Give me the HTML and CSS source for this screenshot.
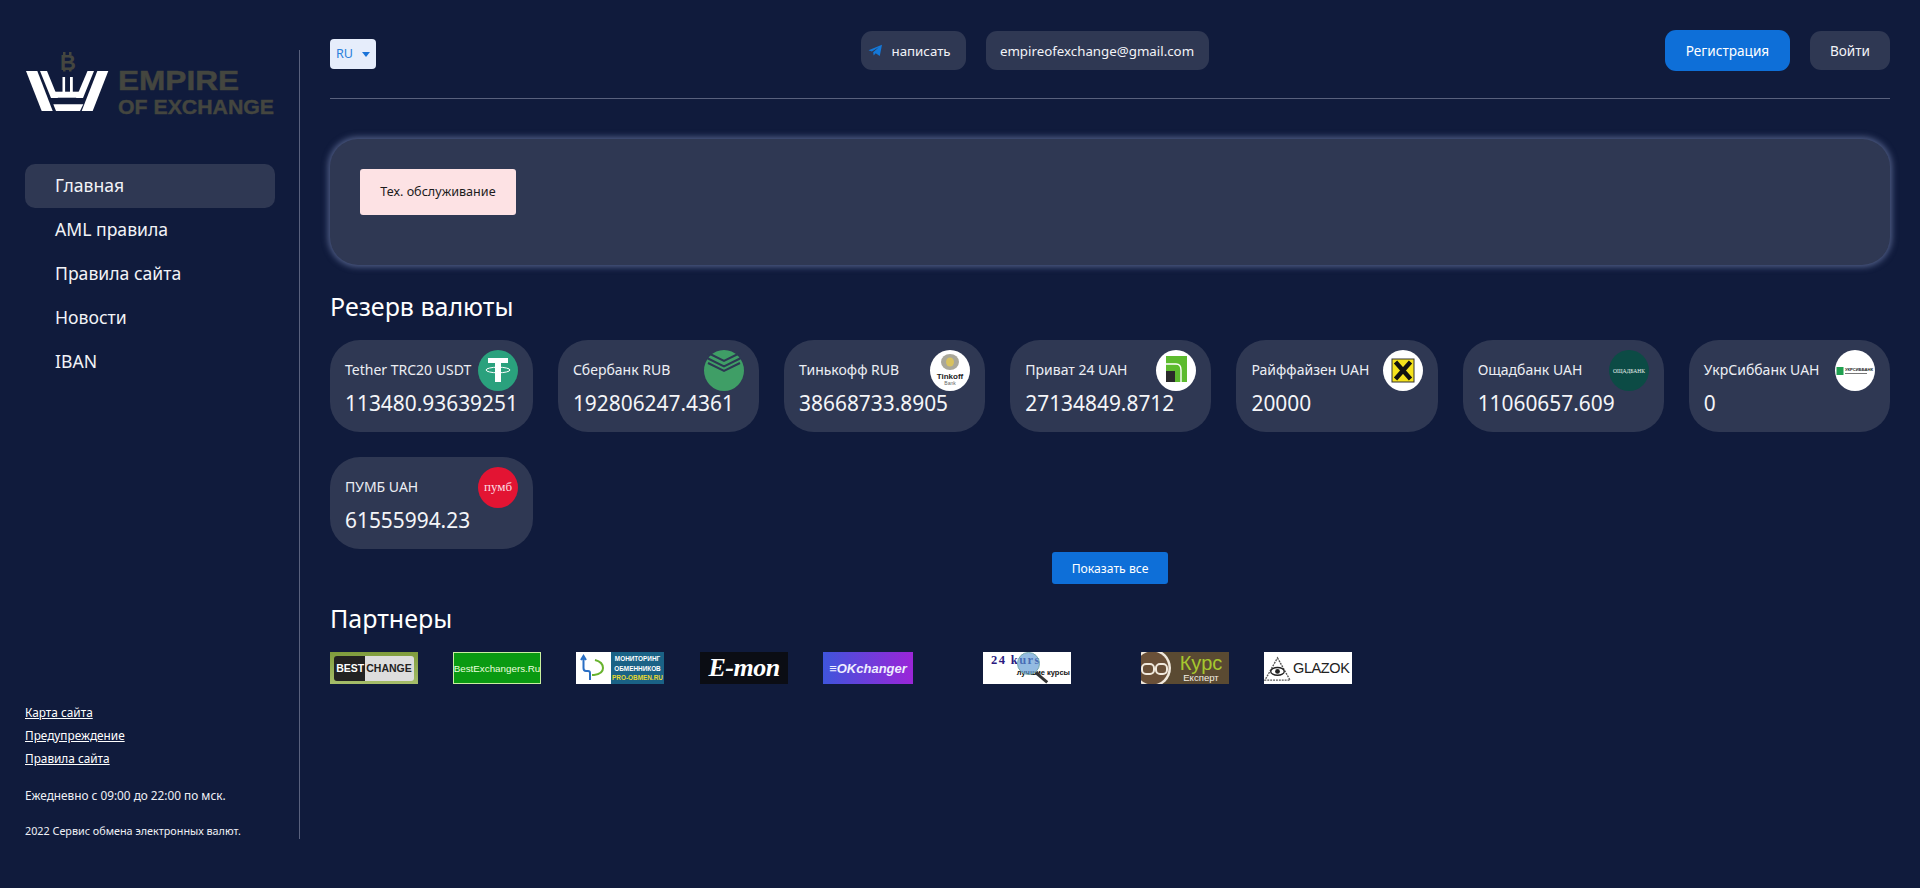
FILE: index.html
```html
<!DOCTYPE html>
<html lang="ru">
<head>
<meta charset="UTF-8">
<meta name="viewport" content="width=device-width, initial-scale=1.0">
<title>Empire of Exchange</title>
<link rel="stylesheet" href="styles.css">
</head>
<body>
<div class="page">
  <aside class="sidebar">
    <div class="sidebar-top">
      <svg class="logo" viewBox="0 0 250 70">
        <g fill="#fff">
          <polygon points="1,21 12.3,21 27.7,61 16.7,61"/>
          <polygon points="15,21 22,21 33,48 26,48"/>
          <polygon points="83.3,21 72.3,21 56.7,61 67.7,61"/>
          <polygon points="69,21 62.5,21 51,48 58,48"/>
          <rect x="27" y="41.7" width="30" height="6"/>
          <rect x="37.5" y="27" width="2.6" height="15"/>
          <rect x="45" y="27" width="2.8" height="15"/>
          <polygon points="28.3,54.3 58.3,54.3 55,61 31,61"/>
        </g>
        <g fill="#44463f">
          <rect x="38" y="2" width="2.5" height="3"/>
          <rect x="44" y="2" width="2.5" height="3"/>
          <rect x="38" y="18.5" width="2.5" height="3"/>
          <rect x="44" y="18.5" width="2.5" height="3"/>
          <text class="logo-b" x="35" y="20">B</text>
          <text class="logo-big" x="93" y="40" textLength="121" lengthAdjust="spacingAndGlyphs">EMPIRE</text>
          <text class="logo-small" x="93" y="64" textLength="156" lengthAdjust="spacingAndGlyphs">OF EXCHANGE</text>
        </g>
      </svg>
      <nav class="menu">
        <a class="menu-item active" href="#">Главная</a>
        <a class="menu-item" href="#">AML правила</a>
        <a class="menu-item" href="#">Правила сайта</a>
        <a class="menu-item" href="#">Новости</a>
        <a class="menu-item" href="#">IBAN</a>
      </nav>
    </div>
    <div class="sidebar-bottom">
      <a class="foot-link" href="#">Карта сайта</a>
      <a class="foot-link" href="#">Предупреждение</a>
      <a class="foot-link" href="#">Правила сайта</a>
      <p class="foot-text first">Ежедневно с 09:00 до 22:00 по мск.</p>
      <p class="foot-text small">2022 Сервис обмена электронных валют.</p>
    </div>
  </aside>

  <main class="content">
    <header class="topbar">
      <div class="lang">RU<span class="lang-arrow"></span></div>
      <div class="contacts">
        <a class="btn-dark tg" href="#">
          <svg class="tg-icon" viewBox="0 0 16 14"><path d="M0.5 6.8 15 0.8 12.6 13 8.2 10 6 12.4 5.5 8.8 11.5 3.4 4 8.2Z" fill="#1478d8"/></svg>
          написать
        </a>
        <a class="btn-dark mail" href="#">empireofexchange@gmail.com</a>
      </div>
      <div class="auth">
        <a class="btn-blue" href="#">Регистрация</a>
        <a class="btn-dark login" href="#">Войти</a>
      </div>
    </header>

    <section class="notice">
      <div class="alert">Тех. обслуживание</div>
    </section>

    <h2 class="title">Резерв валюты</h2>
    <div class="reserves">
      <div class="card">
        <div class="card-head">
          <span class="card-name">Tether TRC20 USDT</span>
          <svg class="coin" viewBox="0 0 40 41">
            <ellipse cx="20" cy="20.5" rx="20" ry="20.5" fill="#2aa17d"/>
            <path d="M10 8H30V13H23V32H17V13H10Z" fill="#fff"/>
            <ellipse cx="20" cy="20" rx="12" ry="2.8" fill="none" stroke="#fff" stroke-width="1"/>
          </svg>
        </div>
        <div class="card-value">113480.93639251</div>
      </div>
      <div class="card">
        <div class="card-head">
          <span class="card-name">Сбербанк RUB</span>
          <svg class="coin" viewBox="0 0 40 41">
            <ellipse cx="20" cy="20.5" rx="20" ry="20.5" fill="#3f9e66"/>
            <path d="M4 3 20 11 36 3M3 8 20 16.5 37 8M4 13 20 21 36 13" fill="none" stroke="#2d3853" stroke-width="2"/>
          </svg>
        </div>
        <div class="card-value">192806247.4361</div>
      </div>
      <div class="card">
        <div class="card-head">
          <span class="card-name">Тинькофф RUB</span>
          <svg class="coin" viewBox="0 0 40 41">
            <ellipse cx="20" cy="20.5" rx="20" ry="20.5" fill="#fff"/>
            <ellipse cx="20" cy="12" rx="9" ry="8" fill="#a9a79a"/>
            <ellipse cx="20" cy="12" rx="4" ry="4.5" fill="#d8c25e"/>
            <text class="tink-name" x="20" y="28.5" text-anchor="middle">Tinkoff</text>
            <text class="tink-bank" x="20" y="35" text-anchor="middle">Bank</text>
          </svg>
        </div>
        <div class="card-value">38668733.8905</div>
      </div>
      <div class="card">
        <div class="card-head">
          <span class="card-name">Приват 24 UAH</span>
          <svg class="coin" viewBox="0 0 40 41">
            <ellipse cx="20" cy="20.5" rx="20" ry="20.5" fill="#fff"/>
            <rect x="10" y="6" width="21" height="26" fill="#5dbb2e"/>
            <path d="M10 14H20Q25 14 25 20V32" fill="none" stroke="#fff" stroke-width="1.4"/>
            <rect x="10" y="21" width="9" height="11" fill="#2b2b2b"/>
          </svg>
        </div>
        <div class="card-value">27134849.8712</div>
      </div>
      <div class="card">
        <div class="card-head">
          <span class="card-name">Райффайзен UAH</span>
          <svg class="coin" viewBox="0 0 40 41">
            <ellipse cx="20" cy="20.5" rx="20" ry="20.5" fill="#fff"/>
            <rect x="9" y="9" width="22" height="23" fill="#f5e21c" stroke="#333" stroke-width="1"/>
            <path d="M12.5 12 27.5 29M27.5 12 12.5 29" stroke="#111" stroke-width="4.4"/>
          </svg>
        </div>
        <div class="card-value">20000</div>
      </div>
      <div class="card">
        <div class="card-head">
          <span class="card-name">Ощадбанк UAH</span>
          <svg class="coin" viewBox="0 0 40 41">
            <ellipse cx="20" cy="20.5" rx="20" ry="20.5" fill="#0c4b45"/>
            <text class="oschad" x="20" y="22.5" text-anchor="middle" textLength="32" lengthAdjust="spacingAndGlyphs">ОЩАДБАНК</text>
          </svg>
        </div>
        <div class="card-value">11060657.609</div>
      </div>
      <div class="card">
        <div class="card-head">
          <span class="card-name">УкрСиббанк UAH</span>
          <svg class="coin" viewBox="0 0 40 41">
            <ellipse cx="20" cy="20.5" rx="20" ry="20.5" fill="#fff"/>
            <rect x="1.5" y="17" width="7" height="8" fill="#20a050"/>
            <text class="ukrsib" x="10" y="20.5" textLength="28" lengthAdjust="spacingAndGlyphs">УКРСИББАНК</text>
            <rect x="10" y="23" width="22" height="1" fill="#777"/>
          </svg>
        </div>
        <div class="card-value">0</div>
      </div>
      <div class="card">
        <div class="card-head">
          <span class="card-name">ПУМБ UAH</span>
          <svg class="coin" viewBox="0 0 40 41">
            <ellipse cx="20" cy="20.5" rx="20" ry="20.5" fill="#e31433"/>
            <text class="pumb" x="20" y="24" text-anchor="middle">пумб</text>
          </svg>
        </div>
        <div class="card-value">61555994.23</div>
      </div>
    </div>
    <div class="more-wrap"><a class="btn-more" href="#">Показать все</a></div>

    <h2 class="title partners-title">Партнеры</h2>
    <div class="partners">
      <a class="partner bestchange" href="#"><span class="bc-dark">BEST</span><span class="bc-light">CHANGE</span></a>
      <a class="partner bestex" href="#">BestExchangers.Ru</a>
      <a class="partner pro" href="#">
        <span class="pro-left">
          <svg class="pro-icon" viewBox="0 0 30 30">
            <path d="M5 7 7.5 3 10 7M7.5 4V15Q7.5 18 10 18H12Q14 18 14 20V27" stroke="#2a6fc4" stroke-width="2" fill="none"/>
            <path d="M19 7Q27 9 27 15T18 22H16" stroke="#68b32e" stroke-width="2" fill="none"/>
          </svg>
        </span>
        <span class="pro-right">МОНИТОРИНГ<br>ОБМЕННИКОВ<br><b class="pro-url">PRO-OBMEN.RU</b></span>
      </a>
      <a class="partner emon" href="#">E-mon</a>
      <a class="partner okch wide" href="#">≡OKchanger</a>
      <a class="partner kurs wide" href="#">
        <span class="kurs-top">24 kurs</span>
        <span class="kurs-sub">лучшие курсы</span>
        <span class="kurs-lens"></span>
      </a>
      <a class="partner expert" href="#">
        <svg class="glasses" viewBox="0 0 32 32">
          <circle cx="11" cy="16" r="19" fill="#f0e8dc"/>
          <circle cx="11" cy="16" r="16.5" fill="#6a5038"/>
          <rect x="1" y="12" width="12" height="10" rx="4" fill="none" stroke="#f0e8dc" stroke-width="2"/>
          <rect x="15" y="12" width="11" height="10" rx="4" fill="none" stroke="#f0e8dc" stroke-width="2"/>
        </svg>
        <span class="expert-text"><span class="expert-big">Курс</span><span class="expert-sub">Експерт</span></span>
      </a>
      <a class="partner glazok" href="#">
        <svg class="eye" viewBox="0 0 28 28"><polygon points="14,3 27,26 1,26" fill="none" stroke="#555" stroke-width="1.4" stroke-dasharray="2 1"/><ellipse cx="14" cy="17" rx="7" ry="4" fill="#fff" stroke="#222" stroke-width="1.4"/><circle cx="14" cy="17" r="2.5" fill="#222"/></svg>
        GLAZOK
      </a>
    </div>
  </main>
</div>
</body>
</html>
```

FILE: styles.css
```css
* {
  box-sizing: border-box;
}
html, body {
  margin: 0;
  padding: 0;
}
body {
  background: #101b3c;
  color: #fff;
  font-family: "Noto Sans", Roboto, sans-serif;
}
a {
  color: inherit;
  text-decoration: none;
}
.page {
  display: flex;
  height: 888px;
  overflow: hidden;
}

/* sidebar */
.sidebar {
  width: 300px;
  height: 789px;
  margin-top: 50px;
  flex-shrink: 0;
  padding-left: 25px;
  padding-right: 24px;
  border-right: 1px solid #59617d;
  display: flex;
  flex-direction: column;
  justify-content: space-between;
}
.logo {
  display: block;
  width: 250px;
  height: 70px;
}
.logo-b {
  font: 700 22px "Liberation Sans", sans-serif;
}
.logo-big {
  font: 700 28px "Liberation Sans", sans-serif;
  stroke: #44463f;
  stroke-width: .5;
}
.logo-small {
  font: 700 19.5px "Liberation Sans", sans-serif;
  stroke: #44463f;
  stroke-width: .4;
}
.menu {
  margin-top: 44px;
  display: flex;
  flex-direction: column;
}
.menu-item {
  height: 44px;
  line-height: 43px;
  padding-left: 30px;
  font-size: 17.6px;
  border-radius: 10px;
  color: #f2f3f7;
}
.menu-item.active {
  background: #2f3853;
}
.sidebar-bottom {
  display: flex;
  flex-direction: column;
  align-items: flex-start;
}
.foot-link {
  font-size: 11.8px;
  line-height: 23px;
  text-decoration: underline;
}
.foot-text {
  margin: 0;
  font-size: 11.8px;
  line-height: 17px;
  margin-top: 18px;
  color: #eef0f5;
}
.foot-text.first {
  margin-top: 17px;
}
.foot-text.small {
  font-size: 10.8px;
}

/* top */
.content {
  flex: 1;
  padding: 0 30px;
  min-width: 0;
}
.topbar {
  height: 99px;
  padding-top: 30px;
  border-bottom: 1px solid #59617d;
  display: flex;
  justify-content: space-between;
  align-items: flex-start;
}
.lang {
  width: 46px;
  height: 30px;
  margin-top: 9px;
  padding-left: 6px;
  background: #e6edfb;
  border-radius: 4px;
  color: #2a80dc;
  font-size: 12.6px;
  line-height: 30px;
  display: flex;
  align-items: center;
  gap: 9px;
}
.lang-arrow {
  width: 0;
  height: 0;
  border-left: 4.5px solid transparent;
  border-right: 4.5px solid transparent;
  border-top: 5px solid #1a73d8;
}
.contacts, .auth {
  display: flex;
  align-items: flex-start;
}
.contacts {
  margin-left: 28px;
  gap: 20px;
}
.auth {
  gap: 20px;
}
.btn-dark {
  height: 39px;
  margin-top: 1px;
  background: #2f3853;
  border-radius: 11px;
  font-size: 13.3px;
  color: #f2f3f7;
  display: flex;
  align-items: center;
  justify-content: center;
}
.tg {
  width: 105px;
  padding-left: 7px;
  justify-content: flex-start;
  gap: 9px;
}
.tg-icon {
  width: 15px;
  height: 13px;
}
.mail {
  width: 223px;
}
.login {
  width: 80px;
  font-size: 13.6px;
}
.btn-blue {
  width: 125px;
  height: 41px;
  background: #0e6fd8;
  border-radius: 11px;
  font-size: 13.6px;
  display: flex;
  align-items: center;
  justify-content: center;
}

/* notice */
.notice {
  margin-top: 40px;
  height: 126px;
  padding: 30px;
  background: #2f3853;
  border-radius: 28px;
  box-shadow: 0 0 6px 2px rgba(125, 140, 185, .6);
}
.alert {
  width: 156px;
  height: 46px;
  padding-bottom: 2px;
  background: #fde2e4;
  border-radius: 3px;
  color: #1c1c1c;
  font-size: 12.6px;
  display: flex;
  align-items: center;
  justify-content: center;
}

/* reserves */
.title {
  margin: 0;
  font-size: 25px;
  font-weight: 400;
  line-height: 34px;
  margin-top: 24px;
  color: #fff;
}
.reserves {
  margin-top: 17px;
  display: grid;
  grid-template-columns: repeat(7, 1fr);
  gap: 25px;
}
.card {
  height: 92px;
  padding: 10px 15px 0;
  background: #2f3853;
  border-radius: 30px;
}
.card-head {
  height: 41px;
  display: flex;
  justify-content: space-between;
  align-items: center;
  gap: 4px;
}
.card-name {
  font-size: 14px;
  padding-bottom: 2px;
  white-space: nowrap;
  color: #eceef3;
}
.coin {
  width: 40px;
  height: 41px;
  flex-shrink: 0;
}
.card-value {
  margin-top: -1px;
  font-size: 20.9px;
  line-height: 26px;
  white-space: nowrap;
  color: #f4f5f8;
}
.tink-name {
  font: 700 8px "Liberation Sans", sans-serif;
  fill: #222;
}
.tink-bank {
  font: 400 5px "Liberation Sans", sans-serif;
  fill: #666;
}
.oschad {
  font: 400 5.5px "Liberation Serif", serif;
  fill: #eef4f2;
}
.ukrsib {
  font: 700 3.6px "Liberation Sans", sans-serif;
  fill: #222;
}
.pumb {
  font: 400 13px "Liberation Serif", serif;
  fill: #fbdde2;
}
.more-wrap {
  margin-top: 3px;
  display: flex;
  justify-content: center;
}
.btn-more {
  width: 116px;
  height: 32px;
  background: #0e6fd8;
  border-radius: 3px;
  font-size: 12.2px;
  display: flex;
  align-items: center;
  justify-content: center;
}
.partners-title {
  margin-top: 17px;
}

/* partners */
.partners {
  margin-top: 17px;
  display: flex;
  gap: 35px;
}
.partner {
  width: 88px;
  height: 32px;
  flex-shrink: 0;
  display: flex;
  align-items: center;
  justify-content: center;
  overflow: hidden;
  position: relative;
}
.wide {
  margin-right: 35px;
}
.bestchange {
  background: linear-gradient(#7f9c3c, #a5bd6a);
  font: 700 10.5px "Liberation Sans", sans-serif;
}
.bc-dark {
  background: #222;
  color: #fff;
  padding: 6px 1px 6px 2px;
  border-radius: 3px 0 0 3px;
  line-height: 13px;
}
.bc-light {
  background: #ddd;
  color: #222;
  padding: 6px 2px 6px 1px;
  border-radius: 0 3px 3px 0;
  line-height: 13px;
}
.bestex {
  background: #0a9a12;
  border: 1px solid #c9f0a0;
  color: #eaffdf;
  font: 400 9.8px "Liberation Sans", sans-serif;
  white-space: nowrap;
}
.pro {
  background: #fff;
  justify-content: flex-start;
  margin-right: 1px;
}
.pro-left {
  width: 35px;
  height: 32px;
  display: flex;
  align-items: center;
}
.pro-icon {
  width: 30px;
  height: 30px;
}
.pro-right {
  flex: 1;
  height: 32px;
  padding-top: 2px;
  background: #1a6286;
  color: #fff;
  font: 700 6.4px/9.5px "Liberation Sans", sans-serif;
  text-align: center;
  white-space: nowrap;
}
.pro-url {
  color: #e8d930;
}
.emon {
  background: #0b0d14;
  color: #fff;
  font: italic 700 26px "Liberation Serif", serif;
  letter-spacing: -.5px;
}
.okch {
  width: 90px;
  background: linear-gradient(90deg, #3f55dc, #9b25d8);
  color: #eef;
  font: italic 700 13px "Liberation Sans", sans-serif;
  white-space: nowrap;
}
.kurs {
  background: #fff;
}
.kurs-top {
  position: absolute;
  left: 8px;
  top: 1px;
  color: #2a1a80;
  font: 700 12.5px "Liberation Serif", serif;
  letter-spacing: 1.4px;
  white-space: nowrap;
}
.kurs-sub {
  position: absolute;
  right: 1px;
  top: 16px;
  color: #111;
  font: 700 7.5px "Liberation Sans", sans-serif;
  white-space: nowrap;
}
.kurs-lens {
  position: absolute;
  left: 34px;
  top: 0;
  width: 23px;
  height: 23px;
  border-radius: 50%;
  background: rgba(90, 150, 210, .65);
  border: 1px solid #7aa;
}
.kurs-lens::after {
  content: "";
  position: absolute;
  left: 16px;
  top: 23px;
  width: 15px;
  height: 3px;
  background: #333;
  transform: rotate(40deg);
}
.expert {
  background: #5a4a32;
  justify-content: flex-start;
}
.glasses {
  width: 32px;
  height: 32px;
  flex-shrink: 0;
}
.expert-text {
  flex: 1;
  display: flex;
  flex-direction: column;
  align-items: center;
}
.expert-big {
  color: #a6c82e;
  font: 400 20px/20px "Liberation Sans", sans-serif;
}
.expert-sub {
  color: #f2ede2;
  font: 400 9.6px/10px "Liberation Sans", sans-serif;
}
.glazok {
  background: #fff;
  color: #222;
  font: 400 14.5px "Liberation Sans", sans-serif;
  justify-content: flex-start;
  gap: 2px;
  letter-spacing: -.4px;
}
.eye {
  width: 27px;
  height: 27px;
  flex-shrink: 0;
}
```
